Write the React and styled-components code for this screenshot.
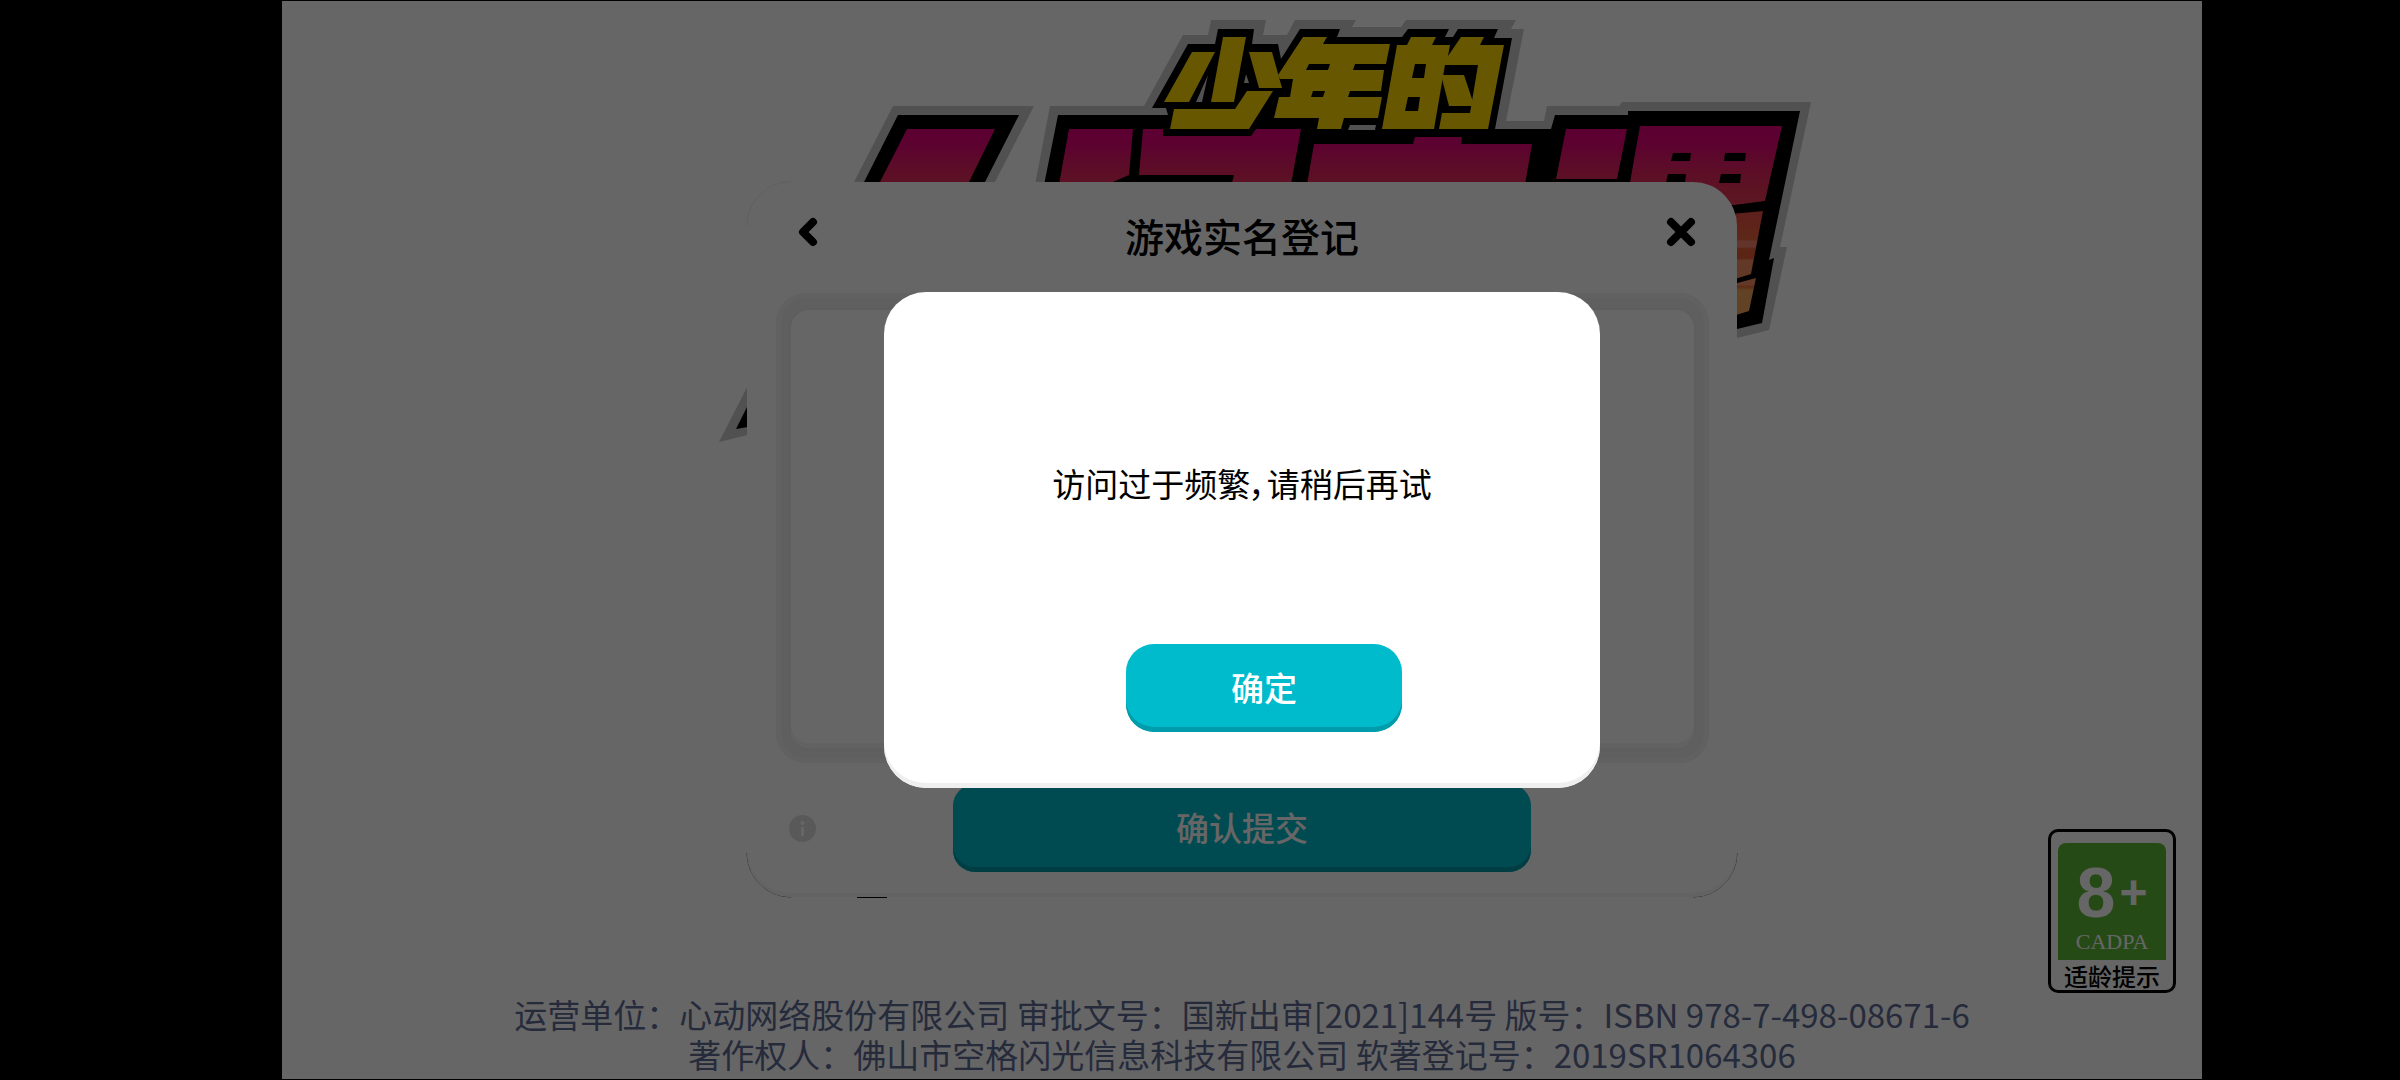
import React from 'react';
import styled, {ThemeProvider, createGlobalStyle} from 'styled-components';

const theme = {
    accent: "#00bbcb",
    accentShade: "#009cab",
    ink: "#000",
    paper: "#fff",
    frame: "#eeeeee",
    legal: "#5f6c96",
    rating: "#5fb937"
};

const GlobalStyle = createGlobalStyle`
  * {
    box-sizing: border-box;
  }
  body {
    margin: 0;
    background: #000;
    font-family: "Noto Sans CJK SC", "Noto Sans", sans-serif;
  }
  button {
    margin: 0;
    padding: 0;
    border: 0;
    font-family: inherit;
    cursor: pointer;
  }
`;

const Screen = styled.div`
  display: flex;
  justify-content: center;
  min-height: 100vh;
  padding-left: 84px;
`;

const Stage = styled.main`
  position: relative;
  display: flex;
  flex-direction: column;
  align-items: center;
  width: 100%;
  max-width: 1920px;
  padding: 181px 0 5px;
  border-top: 1px solid #000;
  border-bottom: 1px solid #000;
  background: ${props => props.theme.paper};
`;

const Art = styled.svg`
  position: absolute;
  top: -1px;
  left: 50%;
  width: 1150px;
  height: 900px;
  margin-left: -575px;
`;

const Dialog = styled.section`
  position: relative;
  width: 100%;
  max-width: 990px;
  border-radius: 44px;
  background: ${props => props.theme.paper};
  box-shadow: inset 0 -4px 0 #f7f7f7;
`;

const DialogHeader = styled.header`
  display: grid;
  grid-template-columns: 40px 1fr 40px;
  padding: 0 41px;
`;

const DialogTitle = styled.h1`
  margin: 0;
  padding-bottom: 4px;
  font-size: 39px;
  font-weight: 500;
  line-height: 107px;
  text-align: center;
  color: ${props => props.theme.ink};
`;

const IconButton = styled.button`
  height: 99px;
  background: none;
  svg {
    display: block;
  }
`;

const FormFrame = styled.div`
  height: 470px;
  margin: 0 28px 0 29px;
  padding: 17px 15px 15px;
  border-radius: 30px;
  background: ${props => props.theme.frame};
  box-shadow: inset 0 0 0 5px #f2f2f2;
`;

const FormArea = styled.div`
  height: 100%;
  border-radius: 18px;
  background: ${props => props.theme.paper};
  box-shadow: inset 0 -5px 0 #f5f5f5, 0 0 4px 1px #e8e8e8;
`;

const DialogFooter = styled.footer`
  display: grid;
  grid-template-columns: 1fr auto 1fr;
  align-items: center;
  padding: 21px 42px 25px;
`;

const InfoButton = styled(IconButton)`
  width: 27px;
  height: 27px;
`;

const MainButton = styled.button`
  width: ${props => props.$wide ? "578px" : "276px"};
  height: 88px;
  padding-bottom: 2px;
  border-radius: ${props => props.$wide ? "22px" : "28px"};
  background: ${props => props.theme.accent};
  box-shadow: inset 0 -5px 0 ${props => props.theme.accentShade};
  color: ${props => props.theme.paper};
  font-size: 33px;
  font-weight: 500;
  line-height: 86px;
`;

const Legal = styled.footer`
  position: relative;
  margin-top: auto;
  font-size: 33px;
  line-height: 40px;
  text-align: center;
  color: ${props => props.theme.legal};
  p {
    margin: 0;
  }
`;

const AgeBadge = styled.aside`
  position: absolute;
  right: 26px;
  bottom: 86px;
  width: 128px;
  padding: 11px 7px 0;
  border: 3px solid #000;
  border-radius: 10px;
  text-align: center;
`;

const AgeMark = styled.div`
  height: 117px;
  padding-top: 16px;
  border-radius: 8px 8px 0 0;
  background: ${props => props.theme.rating};
  color: ${props => props.theme.paper};
`;

const Age = styled.div`
  display: flex;
  align-items: center;
  justify-content: center;
  height: 68px;
  font: bold 70px/68px "Liberation Sans", sans-serif;
  span {
    margin-left: 4px;
    font-size: 48px;
  }
`;

const Cadpa = styled.div`
  font: 22px/30px "Liberation Serif", serif;
`;

const AgeHint = styled.div`
  padding-top: 2px;
  font-size: 24px;
  font-weight: 500;
  line-height: 28px;
  white-space: nowrap;
`;

const Backdrop = styled.div`
  position: absolute;
  inset: 0;
  display: flex;
  align-items: center;
  justify-content: center;
  background: rgba(0, 0, 0, 0.6);
`;

const Popup = styled.div`
  width: 100%;
  max-width: 716px;
  padding-bottom: 56px;
  border-radius: 42px;
  background: ${props => props.theme.paper};
  box-shadow: inset 0 -5px 0 #efefef;
`;

const Message = styled.p`
  display: flex;
  align-items: center;
  justify-content: center;
  min-height: 352px;
  margin: 0;
  padding-top: 30px;
  font-size: 33px;
  font-feature-settings: "palt";
  color: ${props => props.theme.ink};
`;

const Actions = styled.div`
  display: flex;
  justify-content: center;
  padding-left: 44px;
`;

const LogoArt = () => (
    <Art viewBox="667 0 1150 900" aria-hidden="true">
        <defs>
            <linearGradient id="sunset" gradientUnits="userSpaceOnUse" x1="0" y1="126" x2="0" y2="315">
                <stop offset="0" stopColor="#e6007d"/>
                <stop offset="0.1" stopColor="#e60578"/>
                <stop offset="0.18" stopColor="#e61969"/>
                <stop offset="0.3" stopColor="#e62d5a"/>
                <stop offset="0.42" stopColor="#e63c55"/>
                <stop offset="0.46" stopColor="#eb5046"/>
                <stop offset="0.6" stopColor="#eb643c"/>
                <stop offset="0.61" stopColor="#f5826e"/>
                <stop offset="0.64" stopColor="#f5826e"/>
                <stop offset="0.65" stopColor="#e65a32"/>
                <stop offset="0.7" stopColor="#e65a32"/>
                <stop offset="0.71" stopColor="#f58c5f"/>
                <stop offset="0.84" stopColor="#f58c5f"/>
                <stop offset="0.85" stopColor="#e66e37"/>
                <stop offset="0.87" stopColor="#f5a55a"/>
                <stop offset="1" stopColor="#f5a55a"/>
            </linearGradient>
        </defs>
        <g fill="#cacaca">
            <path d="M893 106H1034L995 182L960 250H822L854 182Z"/>
            <path d="M1050 106H1144L1183 35H1208L1211 20H1266L1263 35H1287L1295 20H1356L1352 27H1401L1406 20H1516L1511 29H1524L1506 121H1544L1547 106H1619L1622 102H1811L1780 247H1787L1769 330L1737 338L1700 346L1034 190Z"/>
            <path d="M760 362L719 442L760 432Z"/>
        </g>
        <g fill="#000">
            <path d="M898 115H1019L985 182L970 212H850L864 182Z"/>
            <path d="M1058 115H1168L1166 108H1152L1188 44H1215L1218 29H1254L1252 44H1278L1281 59L1300 29H1340L1337 37H1402L1408 29H1449L1445 37H1453L1458 29H1498L1494 38H1512L1495 129H1551L1555 115H1628V111H1800L1769 260L1774 258L1762 323L1737 329L1700 338L1043 190Z"/>
            <path d="M760 381L736 429L760 425Z"/>
            <path d="M857 895H887V898H857Z"/>
        </g>
        <g fill="url(#sunset)">
            <path d="M907 129H995L969 182L960 200H872L880 182Z"/>
            <path d="M1069 129H1133L1129 175L1113 182V190H1058Z"/>
            <path d="M1143 129H1163V136H1251L1256 129H1301L1290 190H1230L1234 175H1139Z"/>
            <path d="M1314 144H1413L1415 137H1462L1461 144H1532L1524 190H1306Z"/>
            <path d="M1566 129H1627L1617 179H1556Z"/>
            <path d="M1640 126H1782L1765 201L1734 205H1626Z"/>
            <path d="M1700 217L1763 211L1751 274L1700 290Z"/>
            <path d="M1700 293L1756 278L1749 311L1700 326Z"/>
        </g>
        <g fill="#000">
            <path d="M1673 153H1691L1690 161H1671ZM1725 153H1746L1745 161H1724Z"/>
            <path d="M1668 174H1686L1685 183H1666ZM1721 174H1741L1740 183H1719Z"/>
        </g>
        <g fill="#ffd900">
            <path d="M1192 52H1215L1189 102H1164Z"/>
            <path d="M1223 37H1246L1234 102H1211Z"/>
            <path d="M1249 52H1272L1282 88H1259Z"/>
            <path d="M1174 109H1235L1247 91H1273L1249 129H1170Z"/>
            <path fillRule="evenodd" d="M1303 37H1327L1323 44H1390L1386 64H1355L1353 70H1384L1381 91H1350L1348 97H1382L1378 118H1344L1341 129H1317L1319 118H1274L1279 97H1290L1293 79H1280L1278 75ZM1309 64L1306 70H1328L1330 64ZM1313 91L1311 97H1323L1325 91Z"/>
            <path fillRule="evenodd" d="M1411 37H1436L1432 45H1450L1448 56L1461 37H1484L1480 45H1504L1488 129H1439L1442 113H1470L1478 65H1445L1434 129H1382L1397 45H1407ZM1415 64L1412 78H1424L1426 64ZM1408 97L1405 111H1418L1420 97Z"/>
            <path d="M1441 75H1464L1473 102L1472 106H1449Z"/>
        </g>
        <g fill="#cacaca">
            <path d="M1208 75L1202 102H1196ZM1246 74L1249 83H1244Z"/>
            <path d="M1350 125H1376L1375 130H1348Z"/>
        </g>
        <g fill="none" stroke="#000">
            <path d="M747 226A44 44 0 0 1 791 182" strokeOpacity="0.15"/>
            <path d="M747 853A44 44 0 0 0 791 897M1737 853A44 44 0 0 1 1693 897" strokeOpacity="0.6"/>
        </g>
    </Art>
);

const BackIcon = () => (
    <svg width="40" height="40" fill="none" stroke="#000" strokeWidth="8" strokeLinecap="round" strokeLinejoin="round">
        <path d="M25 10L15 20L25 30"/>
    </svg>
);

const CloseIcon = () => (
    <svg width="40" height="40" fill="none" stroke="#000" strokeWidth="8" strokeLinecap="round">
        <path d="M15 10L35 30M35 10L15 30"/>
    </svg>
);

const InfoIcon = () => (
    <svg width="27" height="27">
        <circle cx="13.5" cy="13.5" r="13.5" fill="#dedede"/>
        <circle cx="13.5" cy="8" r="2" fill="#fff"/>
        <path d="M13.5 12V21" stroke="#fff" strokeWidth="3"/>
    </svg>
);

export default function App() {
    return (
        <ThemeProvider theme={theme}>
            <GlobalStyle/>
            <Screen>
                <Stage>
                    <LogoArt/>
                    <Dialog>
                        <DialogHeader>
                            <IconButton aria-label="返回"><BackIcon/></IconButton>
                            <DialogTitle>游戏实名登记</DialogTitle>
                            <IconButton aria-label="关闭"><CloseIcon/></IconButton>
                        </DialogHeader>
                        <FormFrame>
                            <FormArea/>
                        </FormFrame>
                        <DialogFooter>
                            <InfoButton aria-label="说明"><InfoIcon/></InfoButton>
                            <MainButton $wide>确认提交</MainButton>
                        </DialogFooter>
                    </Dialog>
                    <Legal>
                        <p>运营单位：心动网络股份有限公司 审批文号：国新出审[2021]144号 版号：ISBN 978-7-498-08671-6</p>
                        <p>著作权人：佛山市空格闪光信息科技有限公司 软著登记号：2019SR1064306</p>
                    </Legal>
                    <AgeBadge>
                        <AgeMark>
                            <Age>8<span>+</span></Age>
                            <Cadpa>CADPA</Cadpa>
                        </AgeMark>
                        <AgeHint>适龄提示</AgeHint>
                    </AgeBadge>
                    <Backdrop>
                        <Popup role="alertdialog" aria-modal="true" aria-describedby="message">
                            <Message id="message">访问过于频繁，请稍后再试</Message>
                            <Actions>
                                <MainButton>确定</MainButton>
                            </Actions>
                        </Popup>
                    </Backdrop>
                </Stage>
            </Screen>
        </ThemeProvider>
    );
}
